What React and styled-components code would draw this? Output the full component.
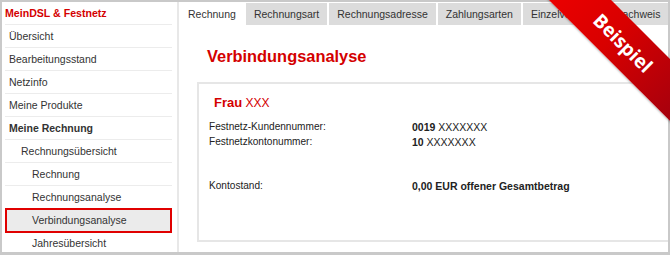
import React from "react";
import styled, { createGlobalStyle } from "styled-components";

const GlobalStyle = createGlobalStyle`
  body {
    margin: 0;
    background: #fff;
    font-family: "Liberation Sans", Arial, sans-serif;
  }
`;

const RED = "#d40000";

const NAV = [
  { label: "Übersicht", level: 0 },
  { label: "Bearbeitungsstand", level: 0 },
  { label: "Netzinfo", level: 0 },
  { label: "Meine Produkte", level: 0 },
  { label: "Meine Rechnung", level: 0, bold: true },
  { label: "Rechnungsübersicht", level: 1 },
  { label: "Rechnung", level: 2 },
  { label: "Rechnungsanalyse", level: 2 },
  { label: "Verbindungsanalyse", level: 2, active: true },
  { label: "Jahresübersicht", level: 2 },
];

const TABS = [
  "Rechnung",
  "Rechnungsart",
  "Rechnungsadresse",
  "Zahlungsarten",
  "Einzelverbindungsnachweis",
];

const App = () => {
  return (
    <Wrapper>
      <GlobalStyle />
      <Frame>
        <Sidebar>
          <SideTitle>MeinDSL &amp; Festnetz</SideTitle>
          {NAV.map((item) => (
            <NavItem
              key={item.label}
              $level={item.level}
              $bold={item.bold}
              $active={item.active}
            >
              {item.label}
            </NavItem>
          ))}
        </Sidebar>
        <Main>
          <Tabs>
            {TABS.map((tab, i) => (
              <Tab key={tab} $active={i === 0}>
                {tab}
              </Tab>
            ))}
          </Tabs>
          <Heading>Verbindungsanalyse</Heading>
          <Card>
            <Name>
              <strong>Frau</strong> XXX
            </Name>
            <InfoGrid>
              <Label>Festnetz-Kundennummer:</Label>
              <Value>
                <b>0019</b> XXXXXXX
              </Value>
              <Label>Festnetzkontonummer:</Label>
              <Value>
                <b>10</b> XXXXXXX
              </Value>
            </InfoGrid>
            <InfoGrid $spaced>
              <Label>Kontostand:</Label>
              <Value>
                <b>0,00 EUR offener Gesamtbetrag</b>
              </Value>
            </InfoGrid>
          </Card>
        </Main>
      </Frame>
      <Ribbon>Beispiel</Ribbon>
    </Wrapper>
  );
};

const Wrapper = styled.div`
  position: relative;
  width: 670px;
  height: 255px;
  overflow: hidden;
`;

const Frame = styled.div`
  box-sizing: border-box;
  width: 670px;
  height: 255px;
  border: 2px solid #c9c9c9;
  border-bottom-width: 3px;
  background: #fff;
  display: flex;
  overflow: hidden;
`;

const Sidebar = styled.nav`
  width: 175px;
  flex-shrink: 0;
  border-right: 2px solid #e8e8e8;
  display: flex;
  flex-direction: column;
`;

const SideTitle = styled.div`
  height: 22px;
  line-height: 23px;
  margin: 0 5px 0 3px;
  border-bottom: 1px solid #ececec;
  color: ${RED};
  font-weight: bold;
  font-size: 10.6px;
`;

const NavItem = styled.div`
  box-sizing: border-box;
  height: ${(p) => (p.$active ? "25px" : "23px")};
  line-height: ${(p) => (p.$active ? "21px" : "23px")};
  margin: ${(p) => (p.$active ? "-1px 5px -1px 3px" : "0 5px 0 3px")};
  padding-left: ${(p) => [4, 16, 27][p.$level] - (p.$active ? 2 : 0)}px;
  border: ${(p) => (p.$active ? "2px solid #e00000" : "none")};
  border-bottom: ${(p) =>
    p.$active ? "2px solid #e00000" : "1px solid #ececec"};
  background: ${(p) => (p.$active ? "#ebebeb" : "transparent")};
  color: #333;
  font-size: 10.5px;
  font-weight: ${(p) => (p.$bold ? "bold" : "normal")};
  white-space: nowrap;
  position: relative;
  z-index: ${(p) => (p.$active ? 1 : 0)};
`;

const Main = styled.main`
  flex: 1;
  display: flex;
  flex-direction: column;
  min-width: 0;
`;

const Tabs = styled.div`
  display: flex;
  gap: 2px;
  margin-top: 1px;
  height: 22px;
  padding-left: 1px;
`;

const Tab = styled.div`
  padding: 0 8px;
  line-height: 22px;
  font-size: 10.5px;
  color: #333;
  white-space: nowrap;
  background: ${(p) => (p.$active ? "#fff" : "#dcdcdc")};
`;

const Heading = styled.h1`
  margin: 21px 0 0 28px;
  height: 20px;
  line-height: 20px;
  font-size: 16.4px;
  font-weight: bold;
  color: ${RED};
`;

const Card = styled.section`
  box-sizing: border-box;
  height: 160px;
  margin: 16px -30px 0 18px;
  border: 2px solid #e6e6e6;
  padding: 9px 8px 0 10px;
`;

const Name = styled.div`
  padding-left: 5px;
  height: 20px;
  line-height: 20px;
  color: ${RED};
  font-size: 12px;

  strong {
    font-size: 13px;
  }
`;

const InfoGrid = styled.div`
  display: grid;
  grid-template-columns: 203px 1fr;
  margin-top: ${(p) => (p.$spaced ? "30px" : "7px")};
  row-gap: 1px;
`;

const Label = styled.div`
  font-size: 10.1px;
  line-height: 14px;
  color: #222;
`;

const Value = styled.div`
  font-size: 10.5px;
  line-height: 14px;
  color: #222;
  white-space: nowrap;
`;

const Ribbon = styled.div`
  position: absolute;
  left: 513px;
  top: 21px;
  width: 220px;
  height: 44px;
  transform: rotate(45deg);
  background: linear-gradient(to right, #f20000, #d80000 45%, #9a0010);
  color: #fff;
  text-align: center;
  line-height: 44px;
  font-family: "Open Sans", "Liberation Sans", sans-serif;
  font-weight: bold;
  font-size: 19px;
  box-shadow: 0 1px 2px rgba(0, 0, 0, 0.25);
`;

export default App;
